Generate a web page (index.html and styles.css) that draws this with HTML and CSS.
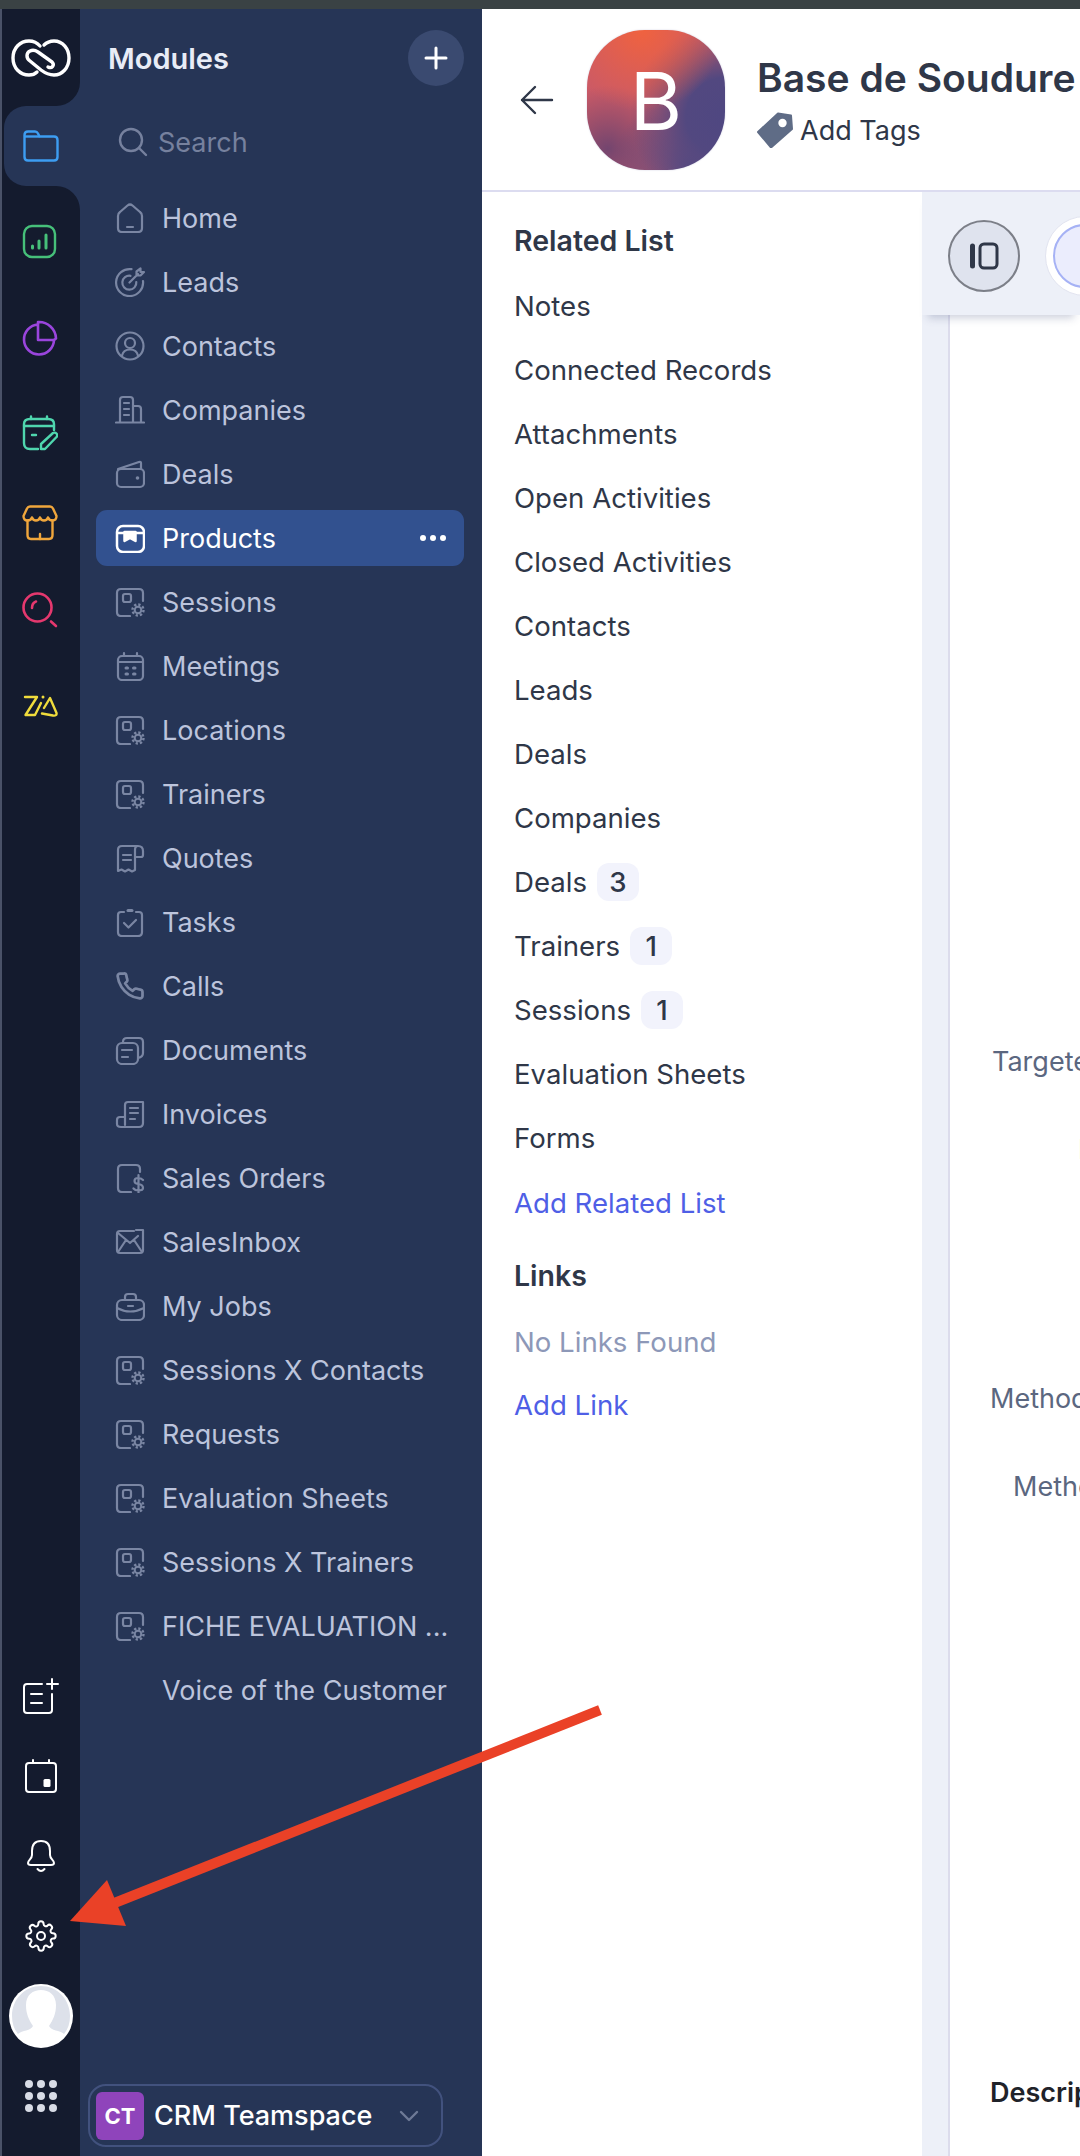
FILE: index.html
```html
<!DOCTYPE html>
<html lang="en">
<head>
    <meta charset="UTF-8">
    <title>Base de Soudure</title>
    <link rel="stylesheet" href="styles.css">
</head>
<body>
    <svg class="defs" width="0" height="0">
        <symbol id="i-custom" viewBox="0 0 30 30">
            <path d="M15 29H6Q2 29 2 25V6Q2 2 6 2H24Q28 2 28 6V14"/>
            <rect x="8" y="7" width="8" height="8" rx="2"/>
            <circle cx="23" cy="23" r="3.300" stroke-width="2"/>
            <circle cx="23" cy="23" r="5.500" stroke-width="2.400" stroke-dasharray="2.300 1.955" stroke-linecap="butt"/>
        </symbol>
    </svg>

    <div class="topbar"></div>

    <div class="app">
        <!-- rail -->
        <nav class="rail">
            <div class="rail-logo">
                <svg width="60" height="38" viewBox="0 0 60 38" fill="none" stroke="#fff" stroke-width="3.400" stroke-linecap="round" stroke-linejoin="round">
                    <path d="M29 7C26 3.500 22 2 18 2C9 2 2 9 2 19C2 29 9 36 18 36C21 36 24 35 26 33"/>
                    <path d="M33 6C36 3 39 2 43 2C52 2 58 10 58 19C58 29 51 36 43 36C38 36 34 34 30 31L19 22C15 19 15 14 19 12C21 11 24 11 27 13L41 23C44 26 41 30 37 28"/>
                </svg>
            </div>
            <div class="rail-tab">
                <div class="rail-tab-inner">
                    <svg width="36" height="32" viewBox="0 0 36 32" fill="none" stroke="#3d9df2" stroke-width="2.400" stroke-linejoin="round">
                        <path d="M1.500 27V5Q1.500 1.500 5 1.500H12Q14 1.500 15 3.500L16.500 6.500H31Q34.500 6.500 34.500 10V27Q34.500 30.500 31 30.500H5Q1.500 30.500 1.500 27Z"/>
                        <path d="M1.500 6.500H16.500"/>
                    </svg>
                </div>
            </div>
            <div class="rail-rest">
                <div class="rail-apps">
                    <svg class="app-chart" width="36" height="36" viewBox="0 0 36 36" fill="none" stroke="#46c07a" stroke-width="2.400" stroke-linecap="round">
                        <rect x="2" y="2" width="31" height="31" rx="8"/>
                        <path d="M10.500 24V22M17 24V17M24 24V11" stroke-width="3"/>
                    </svg>
                    <svg class="app-pie" width="36" height="36" viewBox="0 0 36 36" fill="none" stroke="#9a45dd" stroke-width="2.600" stroke-linejoin="round">
                        <path d="M16 4.500A15 15 0 1 0 32 20H16Z"/>
                        <path d="M16 4.500V2A17 17 0 0 1 34 18.500L32 20"/>
                    </svg>
                    <svg class="app-cal" width="36" height="36" viewBox="0 0 36 36" fill="none" stroke="#4fd6ae" stroke-width="2.400" stroke-linecap="round" stroke-linejoin="round">
                        <path d="M16 34H8Q2 34 2 28V9Q2 4 8 4H26Q32 4 32 9V15"/>
                        <path d="M2 11H32M9 1.500V4M25 1.500V4M10 20H14"/>
                        <path d="M19 34V29L31 18Q33 17 34.500 18.500Q36 20 34.500 22L23 34Z"/>
                    </svg>
                    <svg class="app-store" width="36" height="36" viewBox="0 0 36 36" fill="none" stroke="#f0a63c" stroke-width="2.400" stroke-linecap="round" stroke-linejoin="round">
                        <path d="M8 1.500H28Q30 1.500 31 3.500L34.500 11Q34.500 15.500 30.500 15.500Q27 15.500 26 12.500Q25 15.500 22 15.500Q19 15.500 18 12.500Q17 15.500 14 15.500Q11 15.500 10 12.500Q9 15.500 5.500 15.500Q1.500 15.500 1.500 11L5 3.500Q6 1.500 8 1.500Z"/>
                        <path d="M5.500 15.500V30Q5.500 34 9 34H27Q30.500 34 30.500 30V15.500"/>
                        <path d="M18 29V34"/>
                    </svg>
                    <svg class="app-search" width="36" height="36" viewBox="0 0 36 36" fill="none" stroke="#e5386e" stroke-width="2.600" stroke-linecap="round">
                        <circle cx="15.500" cy="15.500" r="14"/>
                        <path d="M10 16Q10 11 14 9.500M29 29.500L34 34"/>
                    </svg>
                    <svg class="app-zia" width="36" height="36" viewBox="0 0 36 36" fill="none" stroke="#f0dc3c" stroke-width="2.400" stroke-linecap="round" stroke-linejoin="round">
                        <path d="M3 9H15L3.500 27H13L19 15"/>
                        <path d="M21 9V9.100" stroke-width="3"/>
                        <path d="M22 20L28 10L34.500 25Q35 28 31 27.500L20 25.500"/>
                    </svg>
                </div>
                <div class="rail-tools">
                    <div class="rail-tool">
                        <svg width="36" height="36" viewBox="0 0 36 36" fill="none" stroke="#fff" stroke-width="2" stroke-linecap="round">
                            <path d="M19 6H4Q1 6 1 9V32Q1 35 4 35H26Q29 35 29 32V16M8 16H19M8 25H19M29 1V11M24 6H35"/>
                        </svg>
                    </div>
                    <div class="rail-tool">
                        <svg width="34" height="34" viewBox="0 0 34 34" fill="none" stroke="#fff" stroke-width="2" stroke-linecap="round">
                            <rect x="2" y="4" width="30" height="29" rx="3"/>
                            <path d="M9 1V4M25 1V4"/>
                            <rect x="19.500" y="20" width="7" height="8" rx="1.500" fill="#fff" stroke="none"/>
                        </svg>
                    </div>
                    <div class="rail-tool">
                        <svg width="30" height="34" viewBox="0 0 30 34" fill="none" stroke="#fff" stroke-width="2" stroke-linejoin="round" stroke-linecap="round">
                            <path d="M15 2C9 2 6 6 6 12V16C6 20 2 21 2 24Q2 26 5 26H25Q28 26 28 24C28 21 24 20 24 16V12C24 6 21 2 15 2Z"/>
                            <path d="M11.500 30Q15 34 18.500 30"/>
                        </svg>
                    </div>
                    <div class="rail-tool">
                        <svg width="32" height="34" viewBox="0 0 24 24" fill="none" stroke="#fff" stroke-width="1.500" stroke-linecap="round" stroke-linejoin="round">
                            <circle cx="12" cy="12" r="3"/>
                            <path d="M19.400 15a1.650 1.650 0 0 0 .33 1.820l.06.06a2 2 0 0 1-2.830 2.830l-.06-.06a1.650 1.650 0 0 0-2.820 1.170V21a2 2 0 0 1-4 0v-.09A1.650 1.650 0 0 0 7.260 19.700l-.06.06a2 2 0 0 1-2.830-2.830l.06-.06a1.650 1.650 0 0 0-1.170-2.820H3a2 2 0 0 1 0-4h.09A1.650 1.650 0 0 0 4.300 7.260l-.06-.06a2 2 0 0 1 2.830-2.830l.06.06A1.650 1.650 0 0 0 9.950 3.260V3a2 2 0 0 1 4 0v.09a1.650 1.650 0 0 0 2.820 1.170l.06-.06a2 2 0 0 1 2.830 2.830l-.06.06a1.650 1.650 0 0 0 1.170 2.820H21a2 2 0 0 1 0 4h-.09a1.650 1.650 0 0 0-1.510 1z"/>
                        </svg>
                    </div>
                    <div class="rail-tool">
                        <svg class="avatar" width="64" height="64" viewBox="0 0 64 64">
                            <circle cx="32" cy="32" r="32" fill="#fff"/>
                            <path d="M32 2C16 2 3 15 3 32Q3 43 9 50C13 46 22 47 24 42C20 36 17 30 17 21C17 11 24 6 32 6C40 6 47 11 47 21C47 30 44 36 40 42C42 47 51 46 55 50Q61 43 61 32C61 15 48 2 32 2Z" fill="#dde1ea"/>
                        </svg>
                    </div>
                    <div class="rail-tool">
                        <div class="dots">
                            <i></i><i></i><i></i><i></i><i></i><i></i><i></i><i></i><i></i>
                        </div>
                    </div>
                </div>
            </div>
        </nav>

        <!-- modules -->
        <aside class="panel">
            <div class="panel-head">
                <span class="panel-title">Modules</span>
                <button class="add-btn">
                    <svg width="24" height="24" viewBox="0 0 24 24" stroke="#fff" stroke-width="3" stroke-linecap="round"><path d="M12 2V22M2 12H22"/></svg>
                </button>
            </div>
            <div class="panel-search">
                <svg width="30" height="30" viewBox="0 0 30 30" fill="none" stroke="#76819e" stroke-width="2.400" stroke-linecap="round"><circle cx="13" cy="13" r="11"/><path d="M21 21L28 28"/></svg>
                <span>Search</span>
            </div>
            <ul class="mods">
                <li><svg class="ico" viewBox="0 0 30 30"><path d="M3 13Q3 10.500 5 9L12.500 2.500Q15 .5 17.500 2.500L25 9Q27 10.500 27 13V25Q27 29 23 29H7Q3 29 3 25Z"/><path d="M12 24H18"/></svg>Home</li>
                <li><svg class="ico" viewBox="0 0 30 30"><path d="M16.500 2.200A13.500 13.500 0 1 0 28 14"/><path d="M15.500 8.800A7 7 0 1 0 21.300 15"/><path d="M14.500 15.500L23 7M21.500 8.500V4.500L25.500 1.500V5H29L25.500 8.500Z"/></svg>Leads</li>
                <li><svg class="ico" viewBox="0 0 30 30"><circle cx="15" cy="15" r="13.500"/><circle cx="15" cy="12" r="5"/><path d="M7 24.500C8 20 11 18.500 15 18.500S22 20 23 24.500"/></svg>Contacts</li>
                <li><svg class="ico" viewBox="0 0 30 30"><path d="M5 27V5Q5 2 8 2H15Q18 2 18 5V27"/><path d="M18 11H23Q26 11 26 14V27"/><path d="M1 27.500H29M9 8H14M9 14H14M9 20H14"/></svg>Companies</li>
                <li><svg class="ico" viewBox="0 0 30 30"><rect x="2" y="10" width="27" height="18" rx="4"/><path d="M3 10.500V10L24 3Q26 2.500 26 4V10"/><circle cx="22.500" cy="19" r="1.800" fill="currentColor" stroke="none"/></svg>Deals</li>
                <li class="active"><svg class="ico" viewBox="0 0 30 30"><rect x="2" y="3" width="27" height="26" rx="6"/><path d="M2.500 10H28.500"/><path d="M9.500 9H20.500V18L15 15L9.500 18Z" fill="currentColor"/></svg>Products<span class="more"><i></i><i></i><i></i></span></li>
                <li><svg class="ico"><use href="#i-custom"/></svg>Sessions</li>
                <li><svg class="ico" viewBox="0 0 30 30"><rect x="3" y="5" width="25" height="24" rx="4"/><path d="M3 11H28M9 2V5M22 2V5"/><path d="M11 17H12.500M18.500 17H20M11 23H12.500M18.500 23H20" stroke-width="3"/></svg>Meetings</li>
                <li><svg class="ico"><use href="#i-custom"/></svg>Locations</li>
                <li><svg class="ico"><use href="#i-custom"/></svg>Trainers</li>
                <li><svg class="ico" viewBox="0 0 30 30"><path d="M23 3H7Q3 3 3 7V28L6.500 26.500L10 28.500L13.500 26.500L17 28.500L20 27V7Q20 3 23 3Q28 3 28 8V12Q28 14 26 14H20"/><path d="M8 12H16M8 17H16"/></svg>Quotes</li>
                <li><svg class="ico" viewBox="0 0 30 30"><path d="M9 5H6Q3 5 3 8V25Q3 29 7 29H23Q27 29 27 25V8Q27 5 24 5H21"/><path d="M13 3.500H17" stroke-width="3"/><path d="M9 16L13.500 20.500L21 13"/></svg>Tasks</li>
                <li><svg class="ico" viewBox="0 0 24 24" stroke-width="1.700"><path d="M22 16.920v3a2 2 0 0 1-2.180 2 19.790 19.790 0 0 1-8.630-3.070 19.500 19.500 0 0 1-6-6 19.790 19.790 0 0 1-3.070-8.670A2 2 0 0 1 4.110 2h3a2 2 0 0 1 2 1.720 12.840 12.840 0 0 0 .7 2.810 2 2 0 0 1-.45 2.110L8.090 9.910a16 16 0 0 0 6 6l1.270-1.270a2 2 0 0 1 2.110-.45 12.840 12.840 0 0 0 2.810.7A2 2 0 0 1 22 16.920z"/></svg>Calls</li>
                <li><svg class="ico" viewBox="0 0 30 30"><rect x="2" y="8" width="21" height="21" rx="5"/><path d="M8 8V7Q8 3 12 3H24Q28 3 28 7V18Q28 22 23 23"/><path d="M7 15H17M7 22H13"/></svg>Documents</li>
                <li><svg class="ico" viewBox="0 0 30 30"><path d="M10 26V6Q10 3 13 3H28V24Q28 28 24 28H6Q2 28 2 25V21Q2 18 5 18H10"/><path d="M15 9H23M15 14H23M15 20H20"/></svg>Invoices</li>
                <li><svg class="ico" viewBox="0 0 30 30"><path d="M16 29H7Q3 29 3 25V6Q3 2 7 2H21Q25 2 25 6V9"/><path d="M28 17Q26 15 23 15Q19.500 15 19.500 18Q19.500 20.500 23 21Q28 21.500 28 25Q28 27.500 23.500 27.500Q20 27.500 18.500 25.500M23.500 12V30"/></svg>Sales Orders</li>
                <li><svg class="ico" viewBox="0 0 30 30" stroke-width="2.600"><path d="M19 4H5Q2 4 2 7V23Q2 26 5 26H25Q28 26 28 23V10"/><path d="M3 6L15 16L23 9M3 25L11 13M27 25L19 13M21 3H28V10"/></svg>SalesInbox</li>
                <li><svg class="ico" viewBox="0 0 30 30"><rect x="2" y="9" width="27" height="20" rx="5"/><path d="M10 9V6Q10 3 13 3H18Q21 3 21 6V9M2 17Q15 24 29 17M13 15H18"/></svg>My Jobs</li>
                <li><svg class="ico"><use href="#i-custom"/></svg>Sessions X Contacts</li>
                <li><svg class="ico"><use href="#i-custom"/></svg>Requests</li>
                <li><svg class="ico"><use href="#i-custom"/></svg>Evaluation Sheets</li>
                <li><svg class="ico"><use href="#i-custom"/></svg>Sessions X Trainers</li>
                <li><svg class="ico"><use href="#i-custom"/></svg>FICHE EVALUATION ...</li>
                <li><span class="ico"></span>Voice of the Customer</li>
            </ul>
            <div class="teamspace">
                <span class="ct">CT</span>
                <span class="ts-name">CRM Teamspace</span>
                <svg width="20" height="12" viewBox="0 0 20 12" fill="none" stroke="#6e7a96" stroke-width="2.400" stroke-linecap="round" stroke-linejoin="round"><path d="M2 2L10 10L18 2"/></svg>
            </div>
        </aside>

        <!-- record -->
        <main class="record">
            <header class="record-head">
                <svg class="back" width="34" height="30" viewBox="0 0 34 30" fill="none" stroke="#2f3748" stroke-width="2.400" stroke-linecap="round" stroke-linejoin="round"><path d="M32 15H2M15 2L2 15L15 28"/></svg>
                <div class="logo-b">B</div>
                <div class="head-text">
                    <div class="record-title">Base de Soudure</div>
                    <div class="tags">
                        <svg width="36" height="36" viewBox="0 0 36 36"><path d="M21 1.500L34 3.500L35 17L14 35.500L1 20Z" fill="#5f6c86" stroke="#5f6c86" stroke-width="2" stroke-linejoin="round"/><circle cx="25.500" cy="11" r="4.200" fill="#fff"/></svg>
                        <span>Add Tags</span>
                    </div>
                </div>
            </header>
            <div class="record-body">
                <section class="related">
                    <h2>Related List</h2>
                    <ul>
                        <li>Notes</li>
                        <li>Connected Records</li>
                        <li>Attachments</li>
                        <li>Open Activities</li>
                        <li>Closed Activities</li>
                        <li>Contacts</li>
                        <li>Leads</li>
                        <li>Deals</li>
                        <li>Companies</li>
                        <li>Deals <span class="badge">3</span></li>
                        <li>Trainers <span class="badge">1</span></li>
                        <li>Sessions <span class="badge">1</span></li>
                        <li>Evaluation Sheets</li>
                        <li>Forms</li>
                        <li class="link">Add Related List</li>
                    </ul>
                    <h2 class="links-head">Links</h2>
                    <div class="no-links">No Links Found</div>
                    <div class="link add-link">Add Link</div>
                </section>
                <section class="detail">
                    <div class="toolbar">
                        <button class="tool-btn">
                            <svg width="30" height="30" viewBox="0 0 30 30" fill="none" stroke="#2f3748" stroke-width="3"><path d="M3.500 5V25" stroke-width="5" stroke-linecap="round"/><rect x="11" y="3" width="17" height="24" rx="4"/></svg>
                        </button>
                        <div class="tool-ring"><div class="tool-ring-in"></div></div>
                    </div>
                    <div class="detail-wrap">
                        <div class="detail-body">
                            <div class="field f-target">Targeted Audience</div>
                            <div class="field f-pre">Prerequisites</div>
                            <div class="field f-method">Methods</div>
                            <div class="field f-meth">Methodology</div>
                            <div class="field f-desc">Description</div>
                        </div>
                    </div>
                </section>
            </div>
        </main>
    </div>

    <!-- annotation -->
    <svg class="annotation" width="1080" height="2156" viewBox="0 0 1080 2156">
        <path d="M600 1710L112 1904" stroke="#ea4127" stroke-width="10"/>
        <polygon points="70,1921 107,1880 126,1926" fill="#ea4127"/>
    </svg>
</body>
</html>
```

FILE: styles.css
```css
* {
    box-sizing: border-box;
}
html, body {
    margin: 0;
    height: 100%;
}
body {
    position: relative;
    display: flex;
    flex-direction: column;
    height: 2156px;
    overflow: hidden;
    background: #fff;
    font-family: Inter, "Noto Sans", sans-serif;
    font-size: 27px;
    color: #2f3748;
}
ul {
    list-style: none;
    margin: 0;
    padding: 0;
}
button {
    border: none;
    padding: 0;
}
.defs {
    position: absolute;
}
.defs symbol, .ico {
    fill: none;
    stroke: currentColor;
    stroke-width: 2.200;
    stroke-linecap: round;
    stroke-linejoin: round;
}
.topbar {
    height: 9px;
    flex: none;
    background: #3a4244;
}
.app {
    display: flex;
    flex: 1;
    min-height: 0;
}

/* rail */
.rail {
    width: 80px;
    flex: none;
    display: flex;
    flex-direction: column;
    background: #263556;
}
.rail-logo {
    height: 97px;
    flex: none;
    display: flex;
    justify-content: center;
    padding: 30px 1px 0 0;
    background: #141b2e;
    border-left: 2px solid #4a5268;
    border-bottom-right-radius: 24px;
}
.rail-tab {
    height: 80px;
    flex: none;
    background: linear-gradient(to right, #141b2e 30px, #263556 30px);
    border-left: 2px solid #4a5268;
}
.rail-tab-inner {
    height: 100%;
    margin-left: 2px;
    display: flex;
    align-items: center;
    padding-left: 19px;
    background: #263556;
    border-radius: 22px 0 0 22px;
}
.rail-rest {
    flex: 1;
    display: flex;
    flex-direction: column;
    align-items: center;
    background: #141b2e;
    border-left: 2px solid #4a5268;
    border-top-right-radius: 24px;
}
.rail-apps {
    display: flex;
    flex-direction: column;
    align-items: center;
}
.rail-apps svg {
    margin-left: -2px;
}
.app-chart { margin-top: 38px; }
.app-pie { margin-top: 60px; }
.app-cal { margin-top: 59px; }
.app-store { margin-top: 54px; }
.app-search { margin-top: 51px; }
.app-zia { margin-top: 60px; }
.rail-tools {
    margin-top: auto;
    padding-bottom: 20px;
}
.rail-tool {
    height: 80px;
    width: 78px;
    display: flex;
    align-items: center;
    justify-content: center;
    margin-left: -1px;
}
.dots {
    display: grid;
    grid-template-columns: repeat(3, 8px);
    gap: 4px;
}
.dots i {
    width: 8px;
    height: 8px;
    border-radius: 50%;
    background: #d8dce6;
}

/* modules panel */
.panel {
    width: 402px;
    flex: none;
    display: flex;
    flex-direction: column;
    background: #263556;
    color: #bcc4dc;
}
.panel-head {
    display: flex;
    justify-content: space-between;
    align-items: center;
    padding: 21px 18px 0 28px;
}
.panel-title {
    font-size: 29px;
    font-weight: 600;
    color: #e8ecf6;
}
.add-btn {
    width: 56px;
    height: 56px;
    display: flex;
    align-items: center;
    justify-content: center;
    border-radius: 50%;
    background: #3a4a70;
}
.panel-search {
    height: 56px;
    margin-top: 28px;
    display: flex;
    align-items: center;
    gap: 10px;
    padding-left: 38px;
    color: #76819e;
}
.mods {
    margin-top: 20px;
    padding: 0 18px 0 16px;
    display: flex;
    flex-direction: column;
    gap: 8px;
    font-size: 27px;
}
.mods li {
    height: 56px;
    display: flex;
    align-items: center;
    gap: 17px;
    padding-left: 19px;
    border-radius: 11px;
    white-space: nowrap;
}
.ico {
    width: 30px;
    height: 30px;
    flex: none;
    color: #7a86a3;
}
.mods .active {
    background: #32518f;
    color: #fff;
}
.mods .active .ico {
    color: #fff;
    stroke-width: 2.500;
}
.more {
    margin-left: auto;
    margin-right: 18px;
    display: flex;
    gap: 4px;
}
.more i {
    width: 6px;
    height: 6px;
    border-radius: 50%;
    background: #fff;
}
.teamspace {
    margin: auto 0 9px 8px;
    width: 355px;
    height: 63px;
    display: flex;
    align-items: center;
    padding-left: 6px;
    border: 2px solid #42527e;
    border-radius: 18px;
}
.ct {
    width: 48px;
    height: 48px;
    flex: none;
    display: flex;
    align-items: center;
    justify-content: center;
    background: #8f44bb;
    border-radius: 6px;
    color: #fff;
    font-size: 22px;
    font-weight: 700;
}
.ts-name {
    margin: 0 27px 0 10px;
    color: #fff;
    font-weight: 500;
    white-space: nowrap;
}

/* record */
.record {
    flex: 1;
    min-width: 0;
    display: flex;
    flex-direction: column;
}
.record-head {
    height: 183px;
    flex: none;
    display: flex;
    align-items: flex-start;
    padding-top: 21px;
    border-bottom: 2px solid #dcdcf0;
}
.back {
    margin: 55px 0 0 38px;
    flex: none;
}
.logo-b {
    width: 138px;
    height: 140px;
    flex: none;
    margin-left: 33px;
    display: flex;
    align-items: center;
    justify-content: center;
    border-radius: 58px;
    box-shadow: 0 0 2px #cfcfe0;
    color: #fff;
    font-size: 80px;
    font-weight: 400;
    background:
        radial-gradient(circle at 40% 0%, #f0623f 0, rgba(240, 98, 63, 0) 50%),
        radial-gradient(circle at 100% 62%, #4f4781 0, #524880 24%, rgba(82, 72, 128, 0) 58%),
        radial-gradient(circle at 75% 100%, #554a82 0, rgba(85, 74, 130, 0) 45%),
        radial-gradient(circle at 15% 85%, #73456f 0, rgba(115, 69, 111, 0) 38%),
        #cb5a66;
}
.head-text {
    margin-left: 32px;
    padding-top: 23px;
    white-space: nowrap;
}
.record-title {
    font-size: 39px;
    line-height: 50px;
    font-weight: 600;
}
.tags {
    display: flex;
    align-items: center;
    gap: 7px;
    margin-top: 9px;
    font-size: 27px;
}
.record-body {
    flex: 1;
    display: flex;
    min-height: 0;
}

/* related list */
.related {
    width: 440px;
    flex: none;
    padding: 27px 0 0 32px;
    font-size: 27.600px;
}
.related h2 {
    margin: 0;
    font-size: 28.500px;
    line-height: 44px;
    font-weight: 600;
}
.related ul {
    margin-top: 23px;
    display: flex;
    flex-direction: column;
    gap: 24px;
}
.related li {
    height: 40px;
    display: flex;
    align-items: center;
    white-space: nowrap;
}
.badge {
    width: 42px;
    height: 38px;
    margin-left: 10px;
    display: flex;
    align-items: center;
    justify-content: center;
    border-radius: 12px;
    background: #f2f3fc;
    font-weight: 500;
}
.link {
    color: #4f5fe6;
}
.related ul .link {
    margin-top: 1px;
}
.related .links-head {
    margin-top: 31px;
}
.no-links {
    margin-top: 24px;
    line-height: 40px;
    color: #8d98b8;
}
.add-link {
    margin-top: 23px;
    line-height: 40px;
}

/* detail */
.detail {
    flex: 1;
    min-width: 0;
    display: flex;
    flex-direction: column;
    background: #edf0f8;
}
.toolbar {
    position: relative;
    height: 123px;
    flex: none;
    display: flex;
    align-items: center;
    gap: 25px;
    padding: 5px 0 0 26px;
    box-shadow: 0 9px 8px -6px rgba(90, 100, 140, .3);
}
.tool-btn {
    width: 72px;
    height: 72px;
    flex: none;
    display: flex;
    align-items: center;
    justify-content: center;
    border-radius: 50%;
    background: #dfe3ee;
    border: 2px solid #7c7f88;
}
.tool-ring {
    width: 80px;
    height: 80px;
    flex: none;
    padding: 7px;
    border-radius: 50%;
    background: #fff;
    border: 1px solid #e2e4f0;
}
.tool-ring-in {
    height: 100%;
    border-radius: 50%;
    background: #ebedfd;
    border: 2px solid #a6b2f5;
}
.detail-wrap {
    flex: 1;
    padding-left: 26px;
}
.detail-body {
    height: 100%;
    padding: 727px 0 0 40px;
    background: #fff;
    border-left: 2px solid #dcdcec;
    color: #5b6780;
    overflow: hidden;
    white-space: nowrap;
}
.field {
    line-height: 40px;
}
.f-target {
    margin-left: 2px;
}
.f-pre {
    margin: 48px 0 0 88px;
}
.f-method {
    margin-top: 209px;
}
.f-meth {
    margin: 48px 0 0 23px;
}
.f-desc {
    margin-top: 566px;
    font-weight: 600;
    color: #1f2229;
}

/* arrow drawn over the screenshot */
.annotation {
    position: absolute;
    top: 0;
    left: 0;
    pointer-events: none;
}
```
